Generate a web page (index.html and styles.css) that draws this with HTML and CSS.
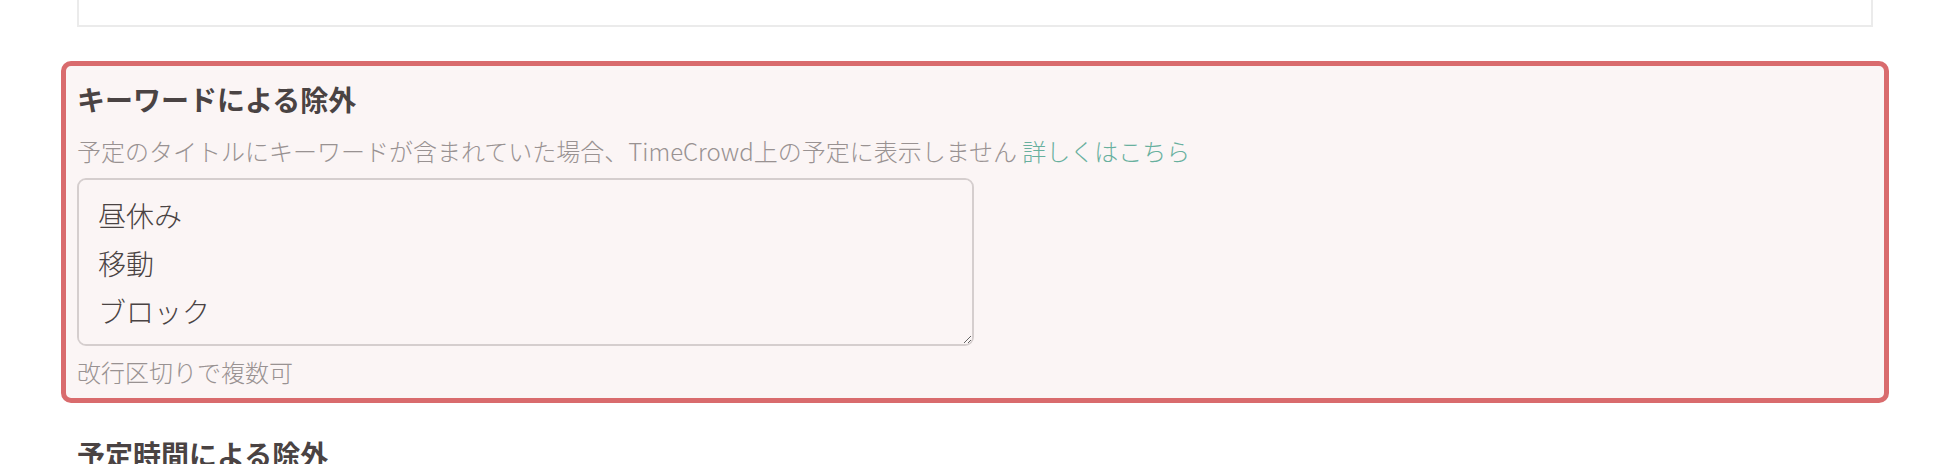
FILE: index.html
```html
<!DOCTYPE html>
<html lang="ja">
<head>
<meta charset="utf-8">
<title>設定</title>
<link rel="stylesheet" href="styles.css">
</head>
<body>
<div class="page">
  <div class="prev-box"></div>
  <section class="section highlighted">
    <h2 class="section-title">キーワードによる除外</h2>
    <p class="desc">予定のタイトルにキーワードが含まれていた場合、TimeCrowd上の予定に表示しません <a class="link" href="#">詳しくはこちら</a></p>
    <textarea class="keywords">昼休み
移動
ブロック</textarea>
    <p class="hint">改行区切りで複数可</p>
  </section>
  <section class="section">
    <h2 class="section-title">予定時間による除外</h2>
  </section>
</div>
</body>
</html>
```
FILE: styles.css
```css
html, body {
  margin: 0;
  padding: 0;
  background: #ffffff;
}
body {
  font-family: "Noto Sans CJK JP", "Noto Sans", sans-serif;
  color: #4a4343;
  overflow: hidden;
}
.page {
  width: 1796px;
  margin-left: 77px;
}
.prev-box {
  height: 25px;
  border: 2px solid #ebebeb;
  border-top: none;
  background: #fff;
}
.section {
  display: flex;
  flex-direction: column;
  align-items: flex-start;
}
.highlighted {
  margin: 34px -16px 0;
  padding: 13px 11px 8px;
  border: 5px solid #d96b6d;
  border-radius: 10px;
  background: #fbf5f5;
}
.section + .section {
  margin-top: 31px;
}
.section-title {
  margin: 0;
  font-size: 28px;
  line-height: 40px;
  font-weight: 700;
  color: #4a4343;
}
.desc {
  margin: 14px 0 0;
  font-size: 24px;
  line-height: 36px;
  font-weight: 300;
  color: #999292;
}
.link {
  color: #68b09e;
  text-decoration: none;
}
.keywords {
  box-sizing: border-box;
  margin-top: 9px;
  width: 897px;
  height: 168px;
  padding: 11px 19px;
  border: 2px solid #d5cece;
  border-radius: 9px;
  background: #fbf5f5;
  font-family: "Noto Sans CJK JP", "Noto Sans", sans-serif;
  font-size: 28px;
  line-height: 48px;
  font-weight: 300;
  color: #4a4343;
  resize: vertical;
  outline: none;
}
.hint {
  margin: 8px 0 0;
  font-size: 24px;
  line-height: 36px;
  font-weight: 300;
  color: #999292;
}
```
